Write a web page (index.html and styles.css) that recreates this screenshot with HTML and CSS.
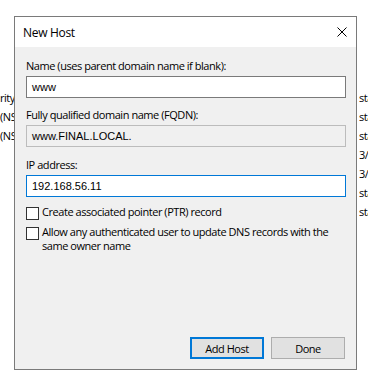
FILE: index.html
```html
<!DOCTYPE html>
<html>
<head>
<meta charset="utf-8">
<link rel="stylesheet" href="styles.css">
</head>
<body>
<div class="screen">
  <div class="bg-left">
    <div class="bg-row">rity (SOA)</div>
    <div class="bg-row">(NS)</div>
    <div class="bg-row">(NS)</div>
  </div>
  <div class="bg-right">
    <div class="bg-row">static</div>
    <div class="bg-row">static</div>
    <div class="bg-row">static</div>
    <div class="bg-row">3/21</div>
    <div class="bg-row">3/21</div>
    <div class="bg-row">static</div>
    <div class="bg-row">static</div>
  </div>
  <div class="dialog">
    <div class="titlebar">
      <span class="title">New Host</span>
      <svg class="close" width="10" height="10" viewBox="0 0 10 10"><path d="M0.5 0.5 L9.5 9.5 M9.5 0.5 L0.5 9.5" stroke="#000" stroke-width="1" fill="none"/></svg>
    </div>
    <div class="body">
      <div class="label first">Name (uses parent domain name if blank):</div>
      <div class="input">www</div>
      <div class="label">Fully qualified domain name (FQDN):</div>
      <div class="input disabled">www.FINAL.LOCAL.</div>
      <div class="label third">IP address:</div>
      <div class="input focused">192.168.56.11</div>
      <div class="check first-check"><span class="box"></span><span class="check-text">Create associated pointer (PTR) record</span></div>
      <div class="check"><span class="box"></span><span class="check-text">Allow any authenticated user to update DNS records with the same owner name</span></div>
      <div class="spacer"></div>
      <div class="buttons">
        <div class="btn btn-default">Add Host</div>
        <div class="btn">Done</div>
      </div>
    </div>
  </div>
</div>
</body>
</html>
```

FILE: styles.css
```css
html, body {
  margin: 0;
  padding: 0;
  background: #ffffff;
}
.screen {
  position: relative;
  width: 368px;
  height: 388px;
  overflow: hidden;
  display: flex;
  justify-content: space-between;
  font-family: "Open Sans", "Noto Sans", sans-serif;
  font-size: 11px;
  letter-spacing: -0.45px;
  color: #000;
}
.bg-left {
  width: 14px;
  overflow: hidden;
  padding-top: 88px;
}
.bg-right {
  width: 9px;
  overflow: hidden;
  padding-top: 88px;
}
.bg-row {
  height: 19px;
  line-height: 19px;
  white-space: nowrap;
}
.dialog {
  position: absolute;
  left: 14px;
  top: 16px;
  width: 343px;
  height: 354px;
  box-sizing: border-box;
  border: 1px solid #7a7a7a;
  background: #f0f0f0;
  display: flex;
  flex-direction: column;
}
.titlebar {
  height: 30px;
  flex: none;
  background: #ffffff;
  display: flex;
  align-items: center;
  justify-content: space-between;
  padding: 0 9px 0 8px;
}
.title {
  font-size: 12px;
  letter-spacing: -0.3px;
}
.close {
  display: block;
}
.body {
  flex: 1;
  display: flex;
  flex-direction: column;
  padding: 11px 10px 10px 11px;
}
.label {
  height: 16px;
  line-height: 16px;
  margin-top: 9px;
  margin-bottom: 2px;
  white-space: nowrap;
}
.label.first {
  margin-top: 0;
}
.label.third {
  margin-top: 10px;
}
.input {
  height: 22px;
  box-sizing: border-box;
  border: 1px solid #7a7a7a;
  background: #ffffff;
  padding-left: 5px;
  font-family: "Liberation Sans", Arial, sans-serif;
  font-size: 11px;
  letter-spacing: 0;
  line-height: 20px;
}
.input.disabled {
  background: #f0f0f0;
  border-color: #bcbcbc;
}
.input.focused {
  border-color: #0078d7;
}
.check {
  display: flex;
  align-items: flex-start;
  margin-top: 5px;
  line-height: 14px;
}
.check.first-check {
  margin-top: 8px;
}
.box {
  flex: none;
  width: 13px;
  height: 13px;
  box-sizing: border-box;
  border: 1px solid #333333;
  background: #ffffff;
  margin-top: 2px;
  margin-right: 3px;
}
.check-text {
  flex: 1;
}
.spacer {
  flex: 1;
}
.buttons {
  display: flex;
  justify-content: flex-end;
  gap: 7px;
  margin-right: 1px;
}
.btn {
  width: 74px;
  height: 22px;
  box-sizing: border-box;
  border: 1px solid #adadad;
  background: #e1e1e1;
  display: flex;
  align-items: center;
  justify-content: center;
}
.btn-default {
  border: 2px solid #0078d7;
}
```
